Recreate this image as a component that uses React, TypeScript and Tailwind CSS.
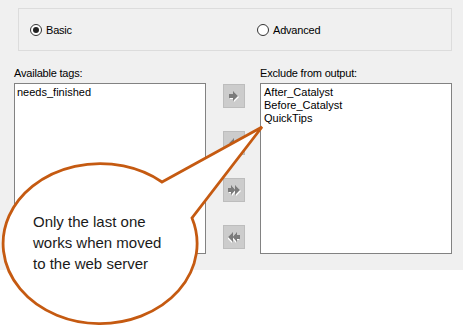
import React from "react";

function Arrow({ double, left }: { double?: boolean; left?: boolean }) {
  const pts = double
    ? "0,3 3,3 3,0 7,4.5 7,0 12,5 7,10 7,5.5 3,10 3,7 0,7"
    : "0,3 4,3 4,0 9,5 4,10 4,7 0,7";
  const w = double ? 12 : 9;
  return (
    <svg width={w + 1} height="11" viewBox={`0 0 ${w + 1} 11`}>
      <g transform={left ? `translate(${w},0) scale(-1,1)` : undefined}>
        <polygon points={pts} fill="#ffffff" transform="translate(1,1)" />
        <polygon points={pts} fill="#7b7b7b" />
      </g>
    </svg>
  );
}

function Radio({ checked, label }: { checked?: boolean; label: string }) {
  return (
    <div className="flex items-center gap-[4px]">
      <div className="w-[12px] h-[12px] rounded-full border border-[#333] bg-white flex items-center justify-center">
        {checked && <div className="w-[6px] h-[6px] rounded-full bg-[#222]" />}
      </div>
      <span className="tracking-[-0.2px] pt-[1px]">{label}</span>
    </div>
  );
}

const btn = "w-[22px] h-[24px] bg-[#cccccc] border border-[#bdbdbd] flex items-center justify-center";

export default function App() {
  return (
    <div className="relative w-[463px] h-[336px] bg-white overflow-hidden text-[11px] leading-[13px] text-black font-['Liberation_Sans',Arial,sans-serif]">
      <div className="h-[270px] bg-[#f0f0f0] pt-[8px]">
        <div className="ml-[18px] w-[434px] h-[43px] border border-[#dcdcdc] flex items-center pl-[11px]">
          <div className="w-[227px]">
            <Radio checked label="Basic" />
          </div>
          <Radio label="Advanced" />
        </div>

        <div className="flex mt-[16px] ml-[14px]">
          <div className="w-[192px]">
            <div className="h-[13px] tracking-[-0.2px]">Available tags:</div>
            <div className="mt-[3px] h-[171px] bg-white border border-[#828282] px-[2px] pt-[2px]">
              <div>needs_finished</div>
            </div>
          </div>

          <div className="w-[54px] pl-[17px] pt-[17px] flex flex-col gap-[23px]">
            <div className={btn}><Arrow /></div>
            <div className={btn}><Arrow left /></div>
            <div className={btn}><Arrow double /></div>
            <div className={btn}><Arrow double left /></div>
          </div>

          <div className="w-[192px]">
            <div className="h-[13px] tracking-[-0.2px]">Exclude from output:</div>
            <div className="mt-[3px] h-[171px] bg-white border border-[#828282] px-[3px] pt-[2px]">
              <div>After_Catalyst</div>
              <div>Before_Catalyst</div>
              <div>QuickTips</div>
            </div>
          </div>
        </div>
      </div>

      {/* callout */}
      <svg className="absolute left-0 top-0" width="463" height="336" viewBox="0 0 463 336">
        <path
          d="M162,182 L262,127 L192,218 A97,80 0 1 1 162,182 Z"
          fill="#ffffff"
          stroke="#c55a11"
          strokeWidth="2.8"
          strokeLinejoin="miter"
        />
      </svg>
      <div className="absolute left-[33px] top-[211px] text-[15px] leading-[21px] text-[#1a1a1a]">
        <div>Only the last one</div>
        <div>works when moved</div>
        <div>to the web server</div>
      </div>
    </div>
  );
}
